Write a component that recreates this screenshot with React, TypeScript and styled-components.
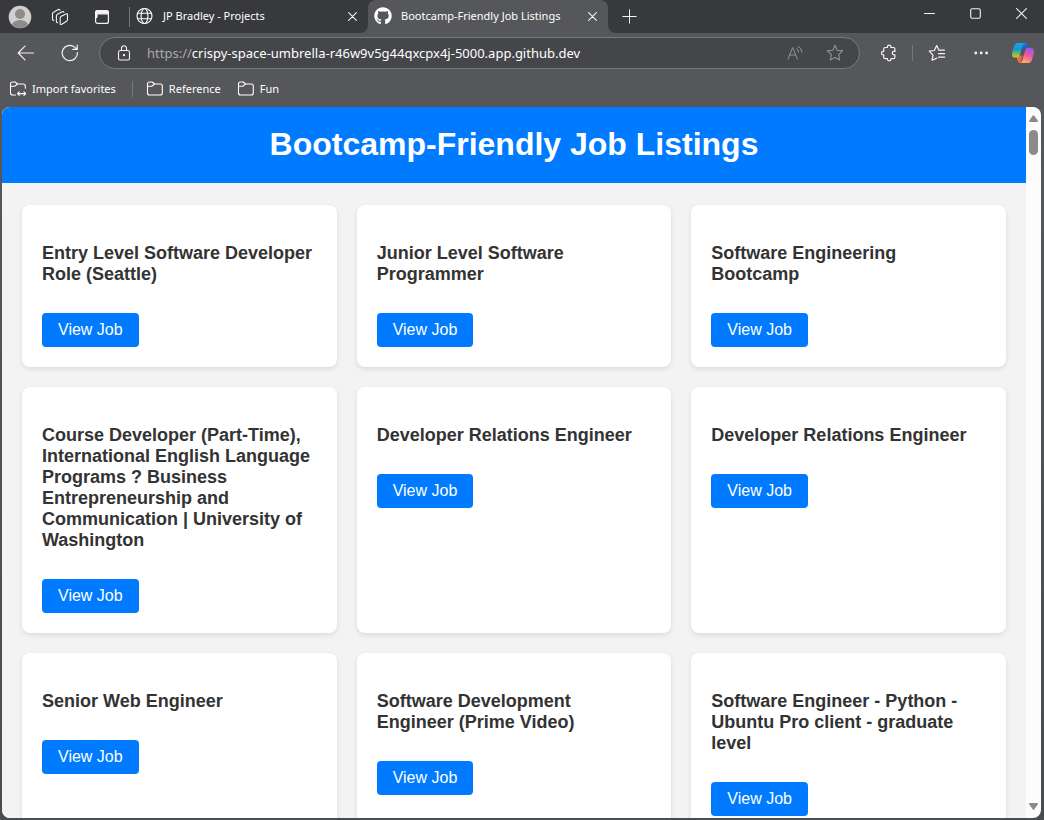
import React from 'react';
import styled, { createGlobalStyle } from 'styled-components';
import { FaGithub } from 'react-icons/fa';

const GlobalStyle = createGlobalStyle`
  *, *::before, *::after { box-sizing: border-box; }
  body { margin: 0; background: #56575b; }
`;

const Browser = styled.div`
  display: flex;
  flex-direction: column;
  height: 100vh;
  overflow: hidden;
  background: linear-gradient(#56575b 14%, #4b4c50);
  color: #ffffff;
  font-family: 'Noto Sans', 'Open Sans', sans-serif;
  font-size: 11px;
  line-height: 16px;
`;

const TitleBar = styled.div`
  display: flex;
  flex: none;
  height: 33px;
  background: #56575b;
`;

const LeftStrip = styled.div`
  display: flex;
  align-items: center;
  width: 368px;
  background: #38393c;
  border-bottom-right-radius: 8px;
`;

const RightStrip = styled.div`
  display: flex;
  flex: 1;
  justify-content: space-between;
  align-items: center;
  background: #38393c;
  border-bottom-left-radius: 8px;
`;

const ActiveTabSlot = styled.div`
  width: 240px;
  background: linear-gradient(#38393c 50%, #56575b 50%);
`;

const Tab = styled.div<{ $active?: boolean }>`
  display: flex;
  flex: 1;
  align-items: center;
  height: 33px;
  padding: 0 4px 1px 6px;
  border-radius: 8px 8px 0 0;
  background: ${(p) => (p.$active ? '#56575b' : 'transparent')};
`;

const TabTitle = styled.span`
  flex: 1;
  margin-left: 9px;
  white-space: nowrap;
`;

const IconButton = styled.button<{ $w: number; $h?: number; $color?: string }>`
  display: flex;
  flex: none;
  align-items: center;
  justify-content: center;
  width: ${(p) => p.$w}px;
  height: ${(p) => p.$h ?? 32}px;
  padding: 0;
  border: 0;
  border-radius: 4px;
  background: none;
  color: ${(p) => p.$color ?? '#f4f4f4'};

  &:hover { background: rgba(255, 255, 255, 0.08); }
`;

const Divider = styled.span<{ $h: number }>`
  flex: none;
  width: 1px;
  height: ${(p) => p.$h}px;
  background: #77787b;
`;

const TabDivider = styled(Divider)`
  margin-left: 5px;
`;

const WindowControls = styled.div`
  display: flex;
  align-self: flex-start;
`;

const Toolbar = styled.div`
  display: flex;
  flex: none;
  align-items: center;
  height: 40px;
  padding: 0 1px 0 4px;
`;

const AddressBar = styled.label`
  display: flex;
  flex: 1;
  align-items: center;
  height: 32px;
  margin: 0 7px;
  padding: 0 4px;
  border: 1px solid #77787b;
  border-radius: 16px;
  background: #454649;
  font-size: 13px;
`;

const Scheme = styled.span`
  margin-left: 3px;
  color: #a9aaac;
`;

const AddressInput = styled.input`
  flex: 1;
  min-width: 0;
  padding: 0;
  border: 0;
  outline: 0;
  background: none;
  color: #ffffff;
  font: inherit;
`;

const ActionDivider = styled(Divider)`
  margin: 0 2px 0 1px;
`;

const FavoritesBar = styled.nav`
  display: flex;
  flex: none;
  align-items: center;
  height: 34px;
  padding: 0 9px 2px;
`;

const Favorite = styled.button`
  display: flex;
  align-items: center;
  gap: 5px;
  padding: 0;
  margin-right: 16px;
  border: 0;
  background: none;
  color: #ffffff;
  font: inherit;
`;

const FavoritesDivider = styled(Divider)`
  margin-right: 13px;
`;

const Viewport = styled.div`
  display: flex;
  flex: 1;
  min-height: 0;
  margin: 0 3px 2px 2px;
  overflow: hidden;
  border-radius: 8px;
  background: #fcfcfc;
`;

const Page = styled.div`
  flex: 1;
  min-width: 0;
  overflow: hidden;
  background: #f3f3f3;
  color: #333333;
  font-family: Arial, 'Liberation Sans', sans-serif;
`;

const PageHeader = styled.header`
  padding: 19px 20px 21px;
  background: #007bff;
  color: #ffffff;
  text-align: center;
`;

const PageTitle = styled.h1`
  margin: 0;
  font-size: 32px;
  line-height: 36px;
`;

const JobGrid = styled.main`
  display: grid;
  grid-template-columns: repeat(3, 1fr);
  gap: 20px;
  padding: 22px 20px 20px;
`;

const JobCard = styled.article`
  padding: 20px;
  border-radius: 8px;
  background: #ffffff;
  box-shadow: 0 2px 5px rgba(0, 0, 0, 0.1);
`;

const JobTitle = styled.h3`
  margin: 18px 0 28px;
  font-size: 18px;
  line-height: 21px;
`;

const JobLink = styled.a`
  display: inline-block;
  padding: 8px 16px;
  border-radius: 4px;
  background: #007bff;
  color: #ffffff;
  font-size: 16px;
  line-height: 18px;
  text-decoration: none;
  vertical-align: top;

  &:hover { background: #0056b3; }
`;

const ScrollTrack = styled.div`
  display: flex;
  flex: none;
  flex-direction: column;
  align-items: center;
  width: 15px;
  padding: 8px 0;
`;

const ScrollThumb = styled.div`
  width: 9px;
  height: 25px;
  margin: 8px 0 auto;
  border-radius: 5px;
  background: #8b8b8b;
`;

type LineIconProps = { size?: number; stroke?: number; children: React.ReactNode };

const LineIcon = ({ size = 18, stroke = 1, children }: LineIconProps) => (
  <svg
    width={size}
    height={size}
    viewBox={`0 0 ${size} ${size}`}
    fill="none"
    stroke="currentColor"
    strokeWidth={stroke}
    strokeLinecap="round"
    strokeLinejoin="round"
    aria-hidden="true"
  >
    {children}
  </svg>
);

const Avatar = () => (
  <svg width="24" height="24" viewBox="0 0 24 24" aria-hidden="true">
    <defs>
      <clipPath id="avatar"><circle cx="12" cy="12" r="11.3" /></clipPath>
    </defs>
    <circle cx="12" cy="12" r="11.3" fill="#d2d0ce" />
    <g clipPath="url(#avatar)" fill="#8f8b88">
      <circle cx="12" cy="9" r="5" />
      <ellipse cx="12" cy="20.5" rx="8" ry="5.5" />
    </g>
  </svg>
);

const Workspaces = () => (
  <LineIcon stroke={1.1}>
    <path d="M9.2 10Q9.2 8.8 10.2 8.3L15 5.9Q16.5 5.3 16.5 6.8V11.5Q16.5 12.6 15.6 13.2L10.8 16.2Q9.2 17 9.2 15.4Z" />
    <path d="M6.6 14.6Q5.4 14.7 5.4 13.3V8Q5.4 6.8 6.4 6.3L11.2 3.7Q12.6 3.1 12.9 4.3" />
    <path d="M2.8 12.4Q1.5 12.5 1.5 11.1V5.9Q1.5 4.7 2.5 4.2L7.3 1.6Q8.7 1 9 2.2" />
  </LineIcon>
);

const TabActions = () => (
  <LineIcon size={16} stroke={1.2}>
    <rect x="1.6" y="1.6" width="12.8" height="12.8" rx="2" />
    <path d="M1.6 3.6Q1.6 1.6 3.6 1.6H12.4Q14.4 1.6 14.4 3.6V4.8H3V8L1.6 9Z" fill="currentColor" />
  </LineIcon>
);

const Globe = () => (
  <LineIcon stroke={1.1}>
    <circle cx="8.5" cy="9" r="7.5" />
    <ellipse cx="8.5" cy="9" rx="3.4" ry="7.5" />
    <path d="M1.7 6.3H15.3M1.7 11.7H15.3" />
  </LineIcon>
);

const Cross = ({ size = 9 }: { size?: number }) => (
  <LineIcon size={size} stroke={1.1}>
    <path d={`M.6.6 ${size - 0.6} ${size - 0.6}M${size - 0.6}.6.6 ${size - 0.6}`} />
  </LineIcon>
);

const Plus = () => (
  <LineIcon size={15}><path d="M7.5.8V14.2M.8 7.5H14.2" /></LineIcon>
);

const Minimize = () => (
  <LineIcon size={11}><path d="M.5 5.5H10.5" /></LineIcon>
);

const Maximize = () => (
  <LineIcon size={11} stroke={1.1}><rect x=".7" y=".7" width="9.6" height="9.6" rx="1.5" /></LineIcon>
);

const Back = () => (
  <LineIcon stroke={1.1}><path d="M16.5 9H1.2M8 2.2 1.2 9 8 15.8" /></LineIcon>
);

const Refresh = () => (
  <LineIcon stroke={1.2}>
    <path d="M16.4 8.5A7.6 7.6 0 1 1 13.6 3.1L16 5.3M16.2 1.2V5.4H11.8" />
  </LineIcon>
);

const Lock = () => (
  <LineIcon size={16} stroke={1.1}>
    <rect x="2.5" y="5.5" width="11" height="9.5" rx="1.8" />
    <path d="M5.5 5.5V3.3A2.5 2.5 0 0 1 10.5 3.3V5.5" />
    <circle cx="8" cy="10.2" r=".6" fill="currentColor" />
  </LineIcon>
);

const ReadAloud = () => (
  <LineIcon size={16}>
    <path d="M1 14 5.7 2.5 10.4 14M2.7 10H8.7" />
    <path d="M9.9 3.6Q11.4 4.8 11.7 7.2M11.2 1.2Q14.8 3.2 15 7.2" />
  </LineIcon>
);

const Star = () => (
  <LineIcon stroke={1.1}>
    <path d="M9 1.3 11.2 6.3 16.6 6.9 12.6 10.6 13.7 16.1 9 13.4 4.3 16.1 5.4 10.6 1.4 6.9 6.8 6.3Z" />
  </LineIcon>
);

const Extensions = () => (
  <LineIcon stroke={1.2}>
    <path d="M5.2 3.5H7.4V3A1.8 1.8 0 0 1 11 3V3.5H13.4Q14.9 3.5 14.9 5V7.4H14A1.7 1.7 0 0 0 14 10.8H14.9V13.2Q14.9 14.7 13.4 14.7H11V15A1.8 1.8 0 0 1 7.4 15V14.7H5.2Q3.7 14.7 3.7 13.2V10.9H3.3A1.8 1.8 0 0 1 3.3 7.3H3.7V5Q3.7 3.5 5.2 3.5Z" />
  </LineIcon>
);

const FavoritesList = () => (
  <LineIcon stroke={1.2}>
    <path d="M8.8 14.1 4 16.3 5 11.2 1.2 7.2 6.3 6.5 8.7 1.6 10.9 6.2H16.4M10.6 9.7H16.6M10.6 13.2H16.6" />
  </LineIcon>
);

const More = () => (
  <LineIcon size={16} stroke={0}>
    <g fill="currentColor">
      <circle cx="2.8" cy="8" r="1.4" />
      <circle cx="8.2" cy="8" r="1.4" />
      <circle cx="13.6" cy="8" r="1.4" />
    </g>
  </LineIcon>
);

const Copilot = () => (
  <svg width="24" height="24" viewBox="0 0 24 24" aria-hidden="true">
    <defs>
      <linearGradient id="copilotLeft" x1="0" y1="0" x2="0" y2="1">
        <stop offset="0" stopColor="#19a6e8" />
        <stop offset=".4" stopColor="#1b93d1" />
        <stop offset=".68" stopColor="#51bd72" />
        <stop offset="1" stopColor="#f2c21b" />
      </linearGradient>
      <linearGradient id="copilotTop" x1="0" y1="0" x2="1" y2="1">
        <stop offset="0" stopColor="#2199ec" />
        <stop offset="1" stopColor="#173fae" />
      </linearGradient>
      <linearGradient id="copilotRight" x1=".7" y1="0" x2=".4" y2="1">
        <stop offset="0" stopColor="#9a55ef" />
        <stop offset=".5" stopColor="#e9579d" />
        <stop offset="1" stopColor="#ffad68" />
      </linearGradient>
      <linearGradient id="copilotBottom" x1="0" y1="0" x2="1" y2="0">
        <stop offset="0" stopColor="#ef8730" />
        <stop offset="1" stopColor="#f04b50" />
      </linearGradient>
    </defs>
    <path d="M6 14.5H11.8L11 17.8Q9.8 22 8.9 22 7.3 22 6.7 19.8L5.9 16.5Z" fill="url(#copilotBottom)" />
    <path d="M8 2H14.6Q16.5 2 17.2 4.1L18 6.8H15.2Q13 6.8 12.4 8.7H9Z" fill="url(#copilotTop)" />
    <path d="M7.3 2H12.8Q12 2.6 11.4 4.8L9.1 13Q8 16.6 4.9 16.6 1 16.6 1 13.4 1 11.8 1.8 9L3.1 5Q4.2 2 7.3 2Z" fill="url(#copilotLeft)" />
    <path d="M16 6.8H19.5Q23 7.2 23 10.4 23 12 22.2 14.8L20.9 18.9Q19.8 22 16.7 22H9Q10.6 22 11.4 19.2L14.2 9.3Q14.8 7.3 16 6.8Z" fill="url(#copilotRight)" />
  </svg>
);

const Folder = ({ importing }: { importing?: boolean }) => (
  <LineIcon stroke={1.1}>
    {importing ? (
      <path d="M6.5 15H3.5Q1.5 15 1.5 13V4Q1.5 2 3.5 2H6.2L8.5 4H14.3Q16.3 4 16.3 6V8.3M1.5 6.2H6L8.5 4M8.6 13.6H16.6M10.3 11.8 8.5 13.6 10.3 15.4M14.9 11.8 16.7 13.6 14.9 15.4" />
    ) : (
      <path d="M3.5 2H6.2L8.5 4H14.3Q16.3 4 16.3 6V13Q16.3 15 14.3 15H3.5Q1.5 15 1.5 13V4Q1.5 2 3.5 2ZM1.5 6.2H6L8.5 4" />
    )}
  </LineIcon>
);

const ScrollArrow = ({ down }: { down?: boolean }) => (
  <svg width="9" height="7" viewBox="0 0 9 7" aria-hidden="true">
    <path
      d={down ? 'M.7 0H8.3Q9.4.3 8.7 1.4L5.4 6.3Q4.5 7.4 3.6 6.3L.3 1.4Q-.4.3.7 0Z' : 'M.7 7H8.3Q9.4 6.7 8.7 5.6L5.4.7Q4.5-.4 3.6.7L.3 5.6Q-.4 6.7.7 7Z'}
      fill="#8b8b8b"
    />
  </svg>
);

const jobs = [
  'Entry Level Software Developer Role (Seattle)',
  'Junior Level Software Programmer',
  'Software Engineering Bootcamp',
  'Course Developer (Part-Time), International English Language Programs ? Business Entrepreneurship and Communication | University of Washington',
  'Developer Relations Engineer',
  'Developer Relations Engineer',
  'Senior Web Engineer',
  'Software Development Engineer (Prime Video)',
  'Software Engineer - Python - Ubuntu Pro client - graduate level',
];

export default function App() {
  return (
    <>
      <GlobalStyle />
      <Browser>
        <TitleBar>
          <LeftStrip>
            <IconButton $w={40} aria-label="Profile"><Avatar /></IconButton>
            <IconButton $w={40} aria-label="Workspaces"><Workspaces /></IconButton>
            <IconButton $w={44} aria-label="Tab actions"><TabActions /></IconButton>
            <TabDivider $h={20} />
            <Tab>
              <Globe />
              <TabTitle>JP Bradley - Projects</TabTitle>
              <IconButton $w={24} $h={24} aria-label="Close tab"><Cross /></IconButton>
            </Tab>
          </LeftStrip>
          <ActiveTabSlot>
            <Tab $active>
              <FaGithub size={18} />
              <TabTitle>Bootcamp-Friendly Job Listings</TabTitle>
              <IconButton $w={24} $h={24} aria-label="Close tab"><Cross /></IconButton>
            </Tab>
          </ActiveTabSlot>
          <RightStrip>
            <IconButton $w={42} aria-label="New tab"><Plus /></IconButton>
            <WindowControls>
              <IconButton $w={46} $h={27} aria-label="Minimize"><Minimize /></IconButton>
              <IconButton $w={46} $h={27} aria-label="Maximize"><Maximize /></IconButton>
              <IconButton $w={46} $h={27} aria-label="Close"><Cross size={11} /></IconButton>
            </WindowControls>
          </RightStrip>
        </TitleBar>

        <Toolbar>
          <IconButton $w={44} aria-label="Back"><Back /></IconButton>
          <IconButton $w={44} aria-label="Refresh"><Refresh /></IconButton>
          <AddressBar>
            <IconButton $w={40} $h={24} aria-label="Site information"><Lock /></IconButton>
            <Scheme>https://</Scheme>
            <AddressInput
              aria-label="Address"
              defaultValue="crispy-space-umbrella-r46w9v5g44qxcpx4j-5000.app.github.dev"
            />
            <IconButton $w={40} $h={24} $color="#919294" aria-label="Read aloud"><ReadAloud /></IconButton>
            <IconButton $w={40} $h={24} $color="#919294" aria-label="Add to favorites"><Star /></IconButton>
          </AddressBar>
          <IconButton $w={44} aria-label="Extensions"><Extensions /></IconButton>
          <ActionDivider $h={16} />
          <IconButton $w={44} aria-label="Favorites"><FavoritesList /></IconButton>
          <IconButton $w={44} aria-label="More"><More /></IconButton>
          <IconButton $w={40} aria-label="Copilot"><Copilot /></IconButton>
        </Toolbar>

        <FavoritesBar>
          <Favorite><Folder importing />Import favorites</Favorite>
          <FavoritesDivider $h={16} />
          <Favorite><Folder />Reference</Favorite>
          <Favorite><Folder />Fun</Favorite>
        </FavoritesBar>

        <Viewport>
          <Page>
            <PageHeader>
              <PageTitle>Bootcamp-Friendly Job Listings</PageTitle>
            </PageHeader>
            <JobGrid>
              {jobs.map((title, i) => (
                <JobCard key={i}>
                  <JobTitle>{title}</JobTitle>
                  <JobLink href="#">View Job</JobLink>
                </JobCard>
              ))}
            </JobGrid>
          </Page>
          <ScrollTrack>
            <ScrollArrow />
            <ScrollThumb />
            <ScrollArrow down />
          </ScrollTrack>
        </Viewport>
      </Browser>
    </>
  );
}
